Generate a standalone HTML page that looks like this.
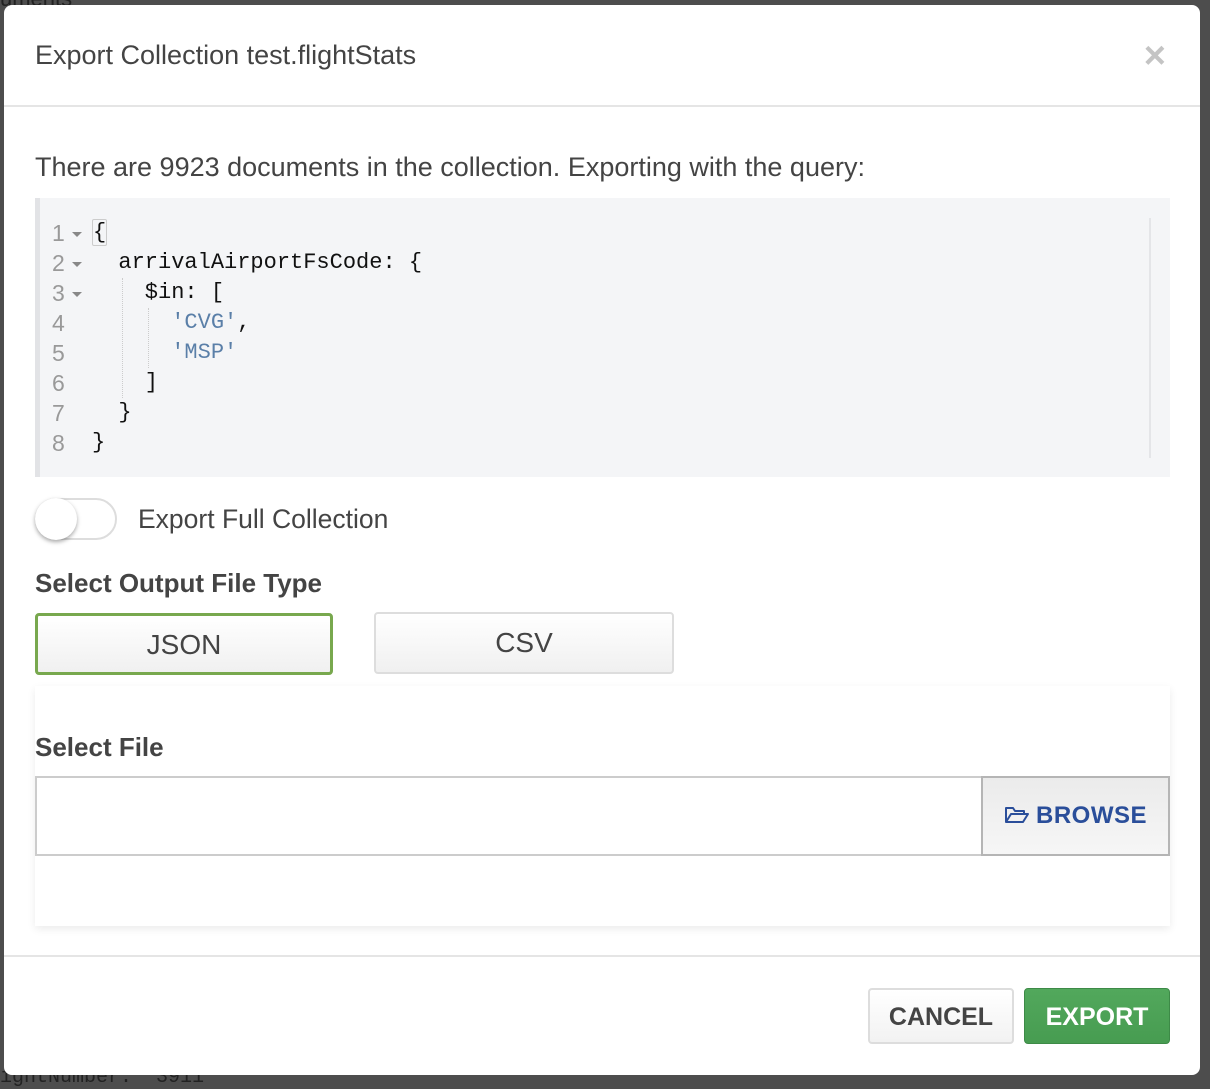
<!DOCTYPE html>
<html><head><style>
*{box-sizing:border-box;margin:0;padding:0}
body{width:1210px;height:1084px;background:#4d4d4d;font-family:"Liberation Sans",sans-serif;position:relative;overflow:hidden}
.bgtext{position:absolute;color:#222;font-size:22px}
.modal{position:absolute;left:4px;top:5px;width:1196px;height:1070px;background:#fff;border-radius:8px;overflow:hidden}
.hdr{height:102px;border-bottom:2px solid #e5e5e5;position:relative}
.hdr h4{position:absolute;left:31px;top:35px;font-size:27px;font-weight:normal;color:#444}
.x{position:absolute;right:34px;top:30px;font-size:38px;color:#c4c4c4;font-weight:bold}
.p{position:absolute;left:31px;top:147px;font-size:27px;color:#444}
.code{position:absolute;left:31px;top:193px;width:1135px;height:279px;background:#f4f5f7;border-left:5px solid #e2e3e6;font-family:"Liberation Mono",monospace;font-size:22px}
.code .vl{position:absolute;left:1109px;top:20px;width:2px;height:240px;background:#e4e5e8}
.ln{position:absolute;left:12px;color:#999;font-family:"Liberation Sans",sans-serif;font-size:23px}
.ar{position:absolute;left:32px;width:0;height:0;border-left:5px solid transparent;border-right:5px solid transparent;border-top:5px solid #888}
.t{position:absolute;color:#111;white-space:pre}
.s{color:#5a7fa8}
.guide{position:absolute;border-left:1px dotted #ccc}
.tog{position:absolute;left:31px;top:493px;width:82px;height:42px;border:2px solid #ddd;border-radius:21px;background:#fff}
.knob{position:absolute;left:-2px;top:-2px;width:42px;height:42px;border-radius:50%;background:#fff;box-shadow:0 2px 4px rgba(0,0,0,.35)}
.lbl{position:absolute;font-size:26.5px;color:#444}
.h{position:absolute;font-size:26px;color:#444;font-weight:bold}
.btn{position:absolute;height:62px;border-radius:4px;background:linear-gradient(#fff,#f0f0f0);text-align:center;font-size:28px;color:#444;line-height:58px}
.card{position:absolute;left:31px;top:681px;width:1135px;height:240px;background:#fff;box-shadow:0 3px 8px rgba(0,0,0,.08)}
.inp{position:absolute;left:31px;top:771px;width:948px;height:80px;border:2px solid #ccc;border-right:none}
.browse{position:absolute;left:977px;top:771px;width:189px;height:80px;border:2px solid #b5b5b5;background:linear-gradient(#ebebeb,#f6f6f6);color:#2a4e9a;font-weight:bold;font-size:24px;line-height:76px;text-align:center;letter-spacing:.5px}
.ftr{position:absolute;left:0;top:950px;width:100%;border-top:2px solid #e5e5e5}
.cancel{position:absolute;left:864px;top:983px;width:146px;height:56px;border:2px solid #ddd;border-radius:4px;background:linear-gradient(#fff,#f2f2f2);font-weight:bold;font-size:25px;color:#444;text-align:center;line-height:54px}
.export{position:absolute;left:1020px;top:983px;width:146px;height:56px;border:1px solid #3d8a47;border-radius:4px;background:linear-gradient(#52a85c,#479c51);font-weight:bold;font-size:25px;color:#fff;text-align:center;line-height:56px}
</style></head><body>
<div class="bgtext" style="left:0;top:-14px">uments</div>
<div class="bgtext" style="left:0;top:1066px;font-family:'Liberation Mono',monospace;font-size:20px">ightNumber: "3911"</div>
<div class="modal">
<div class="hdr"><h4>Export Collection test.flightStats</h4><div class="x">×</div></div>
<div class="p">There are 9923 documents in the collection. Exporting with the query:</div>
<div class="code">
<div class="vl"></div>
<div class="ln" style="top:22px">1</div><div class="ar" style="top:34px"></div>
<div class="ln" style="top:52px">2</div><div class="ar" style="top:64px"></div>
<div class="ln" style="top:82px">3</div><div class="ar" style="top:94px"></div>
<div class="ln" style="top:112px">4</div>
<div class="ln" style="top:142px">5</div>
<div class="ln" style="top:172px">6</div>
<div class="ln" style="top:202px">7</div>
<div class="ln" style="top:232px">8</div>
<div class="guide" style="left:82px;top:80px;height:120px"></div>
<div class="guide" style="left:108px;top:110px;height:60px"></div>
<div class="t" style="left:52px;top:22px"><span style="border:1px solid #ccc;border-radius:2px">{</span></div>
<div class="t" style="left:52px;top:52px">  arrivalAirportFsCode: {</div>
<div class="t" style="left:52px;top:82px">    $in: [</div>
<div class="t" style="left:52px;top:112px">      <span class="s">'CVG'</span>,</div>
<div class="t" style="left:52px;top:142px">      <span class="s">'MSP'</span></div>
<div class="t" style="left:52px;top:172px">    ]</div>
<div class="t" style="left:52px;top:202px">  }</div>
<div class="t" style="left:52px;top:232px">}</div>
</div>
<div class="tog"><div class="knob"></div></div>
<div class="lbl" style="left:134px;top:499px">Export Full Collection</div>
<div class="h" style="left:31px;top:563px">Select Output File Type</div>
<div class="btn" style="left:31px;top:608px;width:298px;border:3px solid #78a84e">JSON</div>
<div class="btn" style="left:370px;top:607px;width:300px;border:2px solid #ddd">CSV</div>
<div class="card"></div>
<div class="h" style="left:31px;top:727px">Select File</div>
<div class="inp"></div>
<div class="browse"><svg width="26" height="20" viewBox="0 0 26 20" style="vertical-align:-2px;margin-right:6px"><path d="M2 17V3h7l2 3h9v3M2 17l5-8h17l-5 8z" fill="none" stroke="#2a4e9a" stroke-width="2" stroke-linejoin="round"/></svg>BROWSE</div>
<div class="ftr"></div>
<div class="cancel">CANCEL</div>
<div class="export">EXPORT</div>
</div>
</body></html>
